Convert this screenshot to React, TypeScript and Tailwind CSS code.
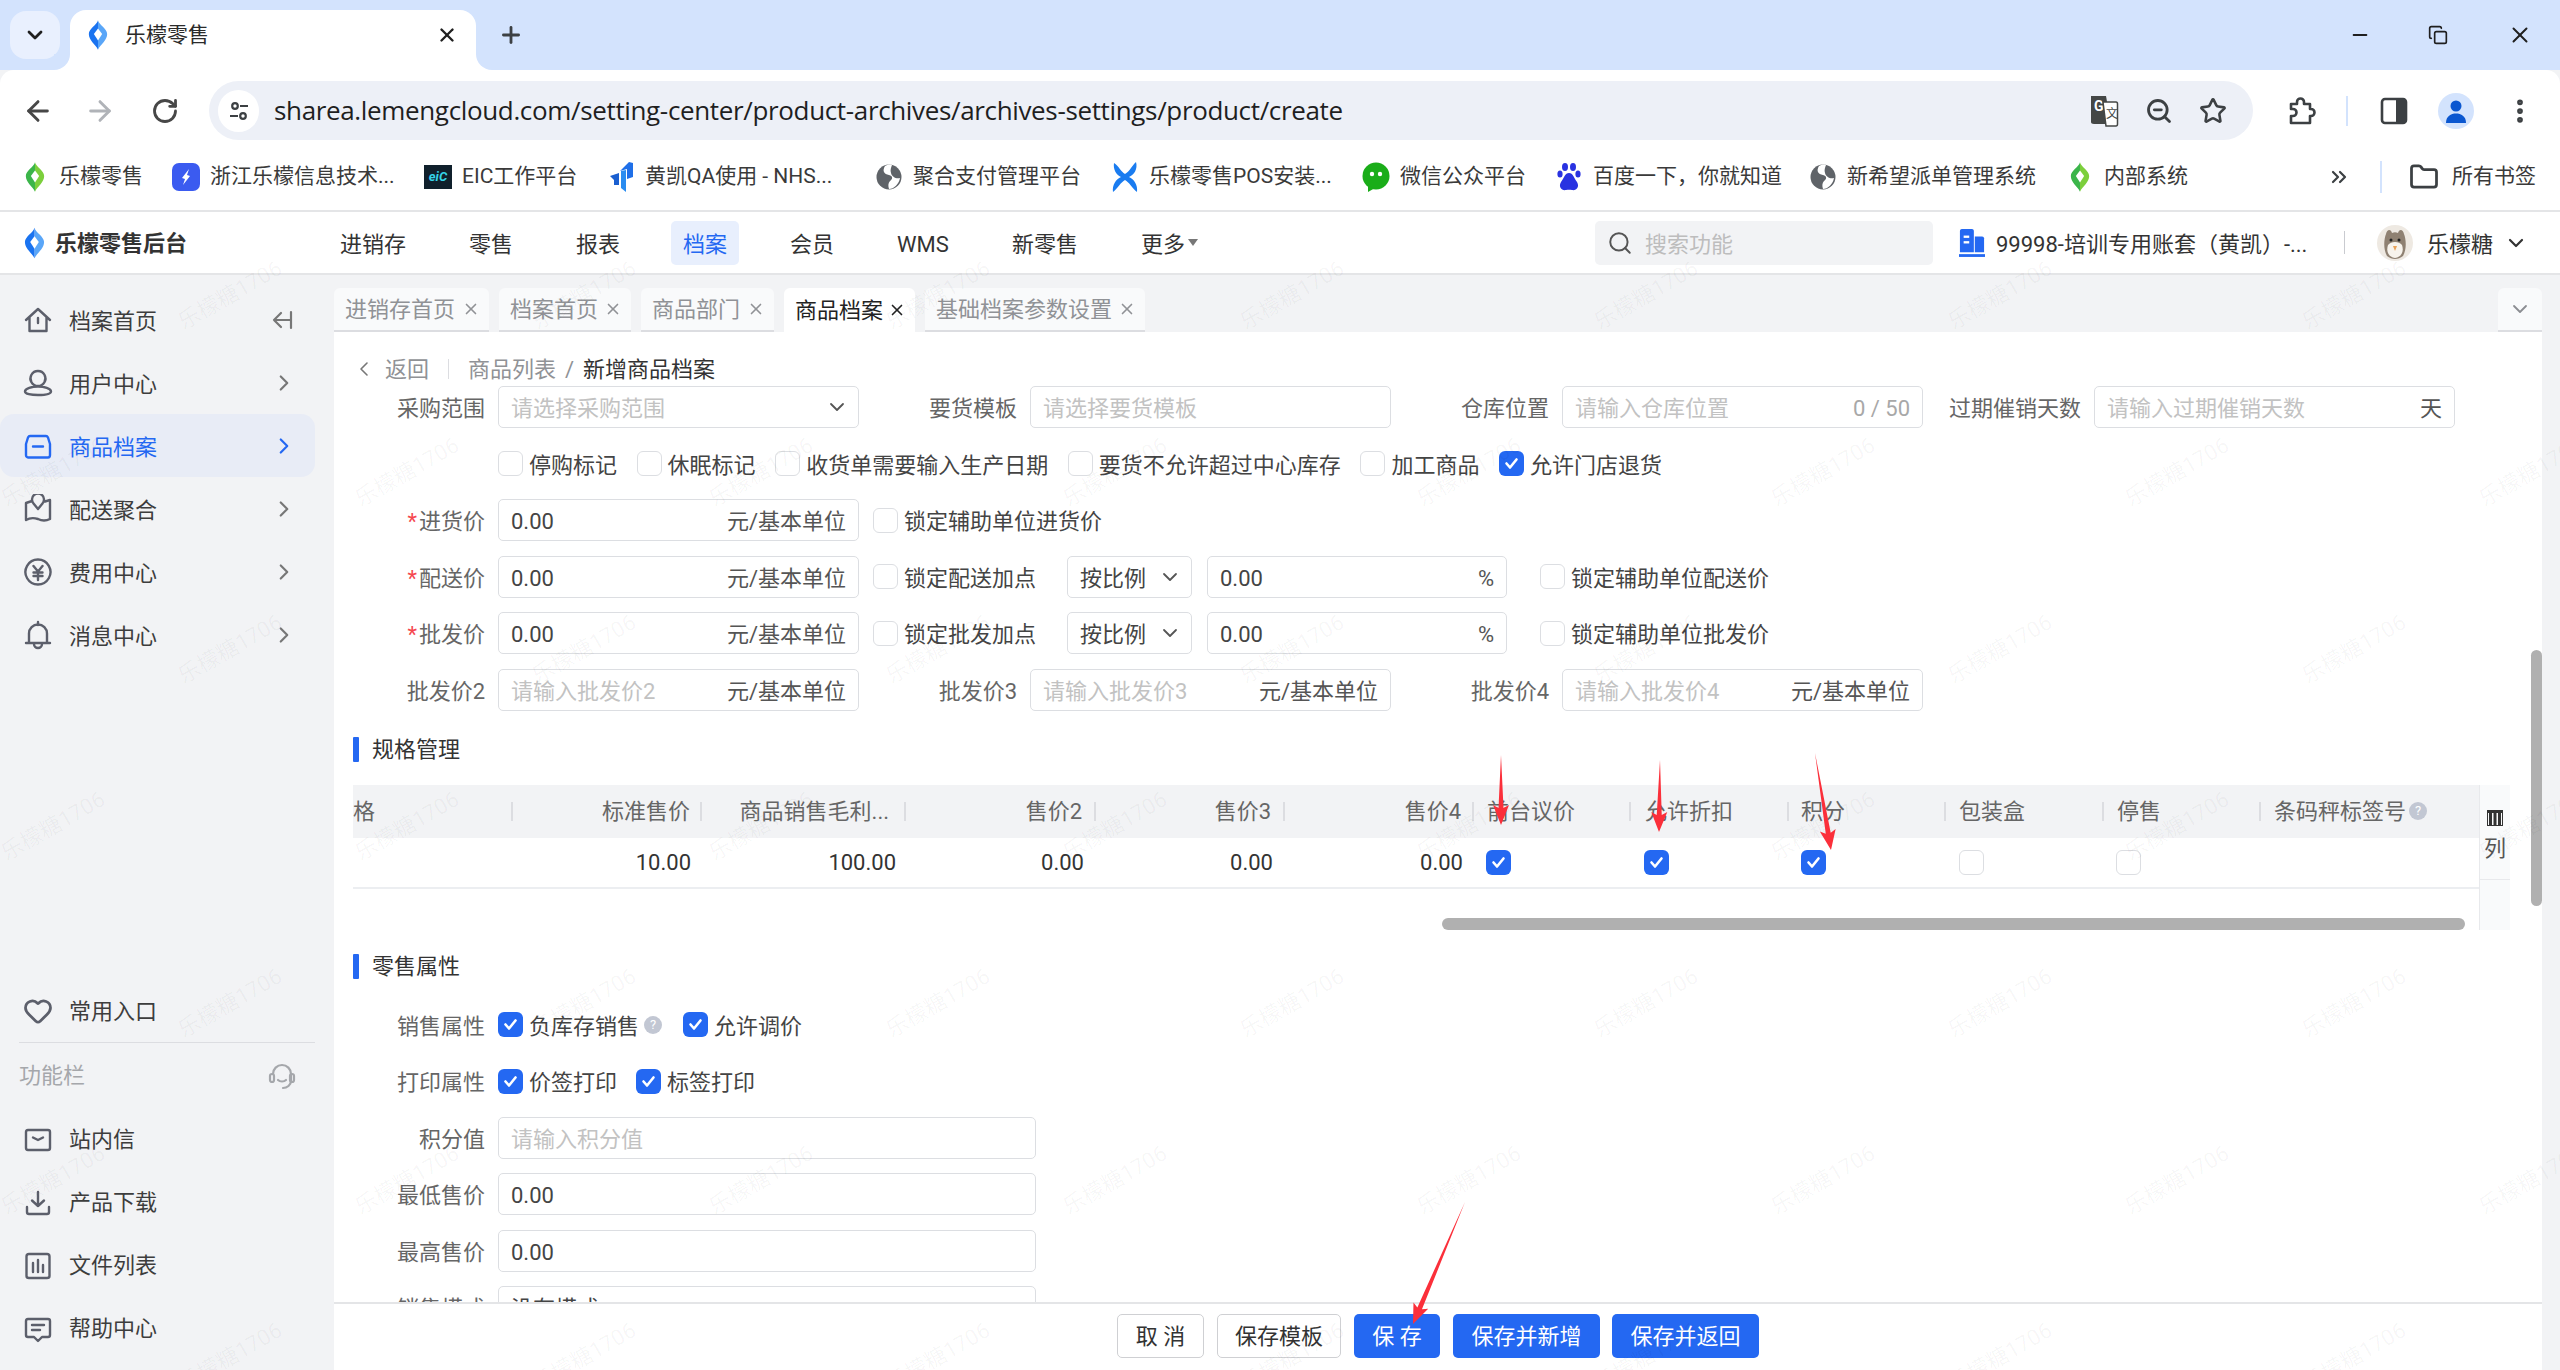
import React from 'react';
import { ArrowLeft, ArrowRight, RotateCw, X, Plus, Minus, ChevronDown, ChevronRight, ChevronLeft, Search, Star, MoreVertical, ChevronsRight, Folder, Heart, ZoomOut, Copy } from 'lucide-react';

const stroke = { fill: 'none', stroke: 'currentColor', strokeWidth: 2.4, strokeLinecap: 'round' as const, strokeLinejoin: 'round' as const };

function Ico({ d, size = 30 }: { d: string; size?: number }) {
  return (
    <svg width={size} height={size} viewBox="0 0 30 30" {...stroke} className="shrink-0">
      <path d={d} />
    </svg>
  );
}

function Leaf({ a, b, w = 22, h = 32 }: { a: string; b: string; w?: number; h?: number }) {
  return (
    <svg width={w} height={h} viewBox="0 0 24 34" className="shrink-0">
      <path d="M12 1 C13 6 22 10 22 16 C22 23 15 27 12 33 Z" fill={b} />
      <path d="M12 1 C11 6 2 10 2 16 C2 23 9 27 12 33 Z" fill={a} />
      <path d="M12 10 L16.5 16 L12 23 L7.5 16 Z" fill="#fff" />
    </svg>
  );
}

function Globe() {
  return (
    <svg width="26" height="26" viewBox="0 0 26 26" className="shrink-0">
      <circle cx="13" cy="13" r="12.5" fill="#5f6368" />
      <path d="M9 2 C6 7 8 10 13 11 C17 12 17 15 14 17 C12 19 12 22 13 25 C18 25 23 20 24 14 C20 15 16 13 15 9 C14 6 15 4 16 1 C13 0 11 1 9 2 Z" fill="#fff" />
    </svg>
  );
}

const bookmarks: { t: string; w: string; icon: React.ReactNode }[] = [
  { t: '乐檬零售', w: 'w-[151px]', icon: <Leaf a="#3bb54a" b="#7ccf3c" /> },
  { t: '浙江乐檬信息技术...', w: 'w-[252px]', icon: <svg width="28" height="28" viewBox="0 0 28 28" className="shrink-0"><rect width="28" height="28" rx="7" fill="#3b5bf0" /><path d="M17 6 L10 15 L13 16 L11 22 L18 13 L15 12 Z" fill="#fff" /></svg> },
  { t: 'EIC工作平台', w: 'w-[183px]', icon: <div className="w-[28px] h-[24px] bg-[#10202c] flex items-center justify-center text-[13px] font-bold italic text-[#35d4e8] shrink-0">eiC</div> },
  { t: '黄凯QA使用 - NHS...', w: 'w-[268px]', icon: <svg width="28" height="32" viewBox="0 0 28 32" className="shrink-0"><path d="M22 1 L26 2 L26 16 L20 18 L20 8 L13 10 Z" fill="#1f6fe8" /><path d="M14 10 L19 9 L19 31 L14 27 Z" fill="#2a8cf0" /><path d="M3 15 L12 12 L12 24 L7 24 L7 19 Z" fill="#1a5fd0" /></svg> },
  { t: '聚合支付管理平台', w: 'w-[236px]', icon: <Globe /> },
  { t: '乐檬零售POS安装...', w: 'w-[251px]', icon: <svg width="28" height="32" viewBox="0 0 28 32" className="shrink-0"><path d="M3 2 C8 5 10 11 14 13 C18 11 20 6 25 1 C27 8 23 14 18 16 C23 18 27 24 26 31 C21 27 18 21 14 19 C10 21 7 27 2 31 C1 24 5 18 10 16 C5 14 2 8 3 2 Z" fill="#1a7cf0" /></svg> },
  { t: '微信公众平台', w: 'w-[193px]', icon: <svg width="28" height="30" viewBox="0 0 28 30" className="shrink-0"><circle cx="14" cy="14" r="13.5" fill="#1aad19" /><path d="M6 24 L6 30 L13 26 Z" fill="#1aad19" /><circle cx="10" cy="12" r="2.2" fill="#fff" /><circle cx="18" cy="12" r="2.2" fill="#fff" /></svg> },
  { t: '百度一下，你就知道', w: 'w-[254px]', icon: <svg width="24" height="30" viewBox="0 0 24 30" className="shrink-0" fill="#2932e1"><ellipse cx="8" cy="5" rx="3" ry="4" /><ellipse cx="16" cy="5" rx="3" ry="4" /><ellipse cx="3" cy="12" rx="2.6" ry="3.6" /><ellipse cx="21" cy="12" rx="2.6" ry="3.6" /><path d="M12 11 C8 11 7 16 4 20 C1 25 5 29 9 28 C11 27.500 13 27.500 15 28 C19 29 23 25 20 20 C17 16 16 11 12 11 Z" /></svg> },
  { t: '新希望派单管理系统', w: 'w-[257px]', icon: <Globe /> },
  { t: '内部系统', w: 'w-[260px]', icon: <Leaf a="#3bb54a" b="#7ccf3c" /> },
];

const sideTop: { t: string; d: string }[] = [
  { t: '档案首页', d: 'M3 15 L15 4 L27 15 M6.500 12.500 V26 H23.500 V12.500 M15 13 V18' },
  { t: '用户中心', d: 'M15 3 A7.500 7.500 0 1 1 14.900 3 Z M15 18.500 C21 18.500 28 20.500 28 23.500 C28 26 22 27 15 27 C8 27 2 26 2 23.500 C2 20.500 9 18.500 15 18.500 Z' },
  { t: '商品档案', d: 'M7 5 H23 C24 5 24.500 5.500 25 6.500 L27 13 V24 C27 25.500 26 26.500 25 26.500 H5 C4 26.500 3 25.500 3 24 V13 L5 6.500 C5.500 5.500 6 5 7 5 Z M10 15.500 H20' },
  { t: '配送聚合', d: 'M9 7 L3 9 V26 C8 23 12 24 15 25 C19 27 23 27 27 25 V6 L22 7.500 M15 15 L10.500 9.500 A6 6 0 1 1 19.500 9.500 Z' },
  { t: '费用中心', d: 'M15 2.500 A12.500 12.500 0 1 1 14.900 2.500 Z M10.500 9 L15 14.500 L19.500 9 M10.500 15.500 H19.500 M10.500 19 H19.500 M15 14.500 V23' },
  { t: '消息中心', d: 'M15 2 V5 M6 23 V13.500 A9 9 0 0 1 24 13.500 V23 M3 23 H27 M11 24 A4 4 0 0 0 19 24' },
];

const sideBottom: { t: string; d: string }[] = [
  { t: '站内信', d: 'M5 5 H25 C26.500 5 27 6 27 7 V23 C27 24 26.500 25 25 25 H5 C3.500 25 3 24 3 23 V7 C3 6 3.500 5 5 5 Z M10 12.500 L15 15 L20 12.500' },
  { t: '产品下载', d: 'M15 4 V18 M9 12.500 L15 18 L21 12.500 M4 19 V24 C4 25.500 5 26 6 26 H24 C25 26 26 25.500 26 24 V19' },
  { t: '文件列表', d: 'M6 3 H24 C25.500 3 26.500 4 26.500 5.500 V25 C26.500 26 25.500 27 24 27 H6 C4.500 27 3.500 26 3.500 25 V5.500 C3.500 4 4.500 3 6 3 Z M10 12 V21 M15 9 V21 M20 14 V21' },
  { t: '帮助中心', d: 'M5 5 H25 C26.500 5 27 6 27 7 V21 C27 22.500 26.500 23 25 23 H19 L15 27 L11 23 H5 C3.500 23 3 22.500 3 21 V7 C3 6 3.500 5 5 5 Z M9 11 H21 M9 16 H17' },
];

function Check({ on = false }: { on?: boolean }) {
  return on ? (
    <span className="w-[25px] h-[25px] rounded-[6px] bg-[#2468f2] flex items-center justify-center shrink-0">
      <svg width="17" height="17" viewBox="0 0 17 17" fill="none" stroke="#fff" strokeWidth="2.600" strokeLinecap="round" strokeLinejoin="round"><path d="M3.500 8.500 L7 12.500 L13.500 4.500" /></svg>
    </span>
  ) : (
    <span className="w-[25px] h-[25px] rounded-[6px] border border-[#dcdee2] bg-white shrink-0" />
  );
}

function Cb({ t, on, cls = '' }: { t: string; on?: boolean; cls?: string }) {
  return (
    <div className={`flex items-center gap-[6px] whitespace-nowrap text-[#444] ${cls}`}>
      <Check on={on} />
      <span className="pt-[3px]">{t}</span>
    </div>
  );
}

function Help() {
  return <span className="w-[18px] h-[18px] rounded-full bg-[#c2c7d3] text-white text-[13px] flex items-center justify-center shrink-0">?</span>;
}

function Field({ ph, v, suffix, w = 'w-[361px]', chev, sufCls = 'text-[#555]' }: { ph?: string; v?: string; suffix?: string; w?: string; chev?: boolean; sufCls?: string }) {
  return (
    <div className={`h-[42px] ${w} border border-[#dcdee2] rounded-[5px] bg-white flex items-center justify-between pl-[12px] pr-[12px] pt-[3px] shrink-0 whitespace-nowrap`}>
      <span className={v ? 'text-[#444]' : 'text-[#c2c2c2]'}>{v ?? ph}</span>
      {suffix && <span className={sufCls}>{suffix}</span>}
      {chev && <ChevronDown size={24} className="text-[#555] -mt-[3px] -mr-[3px]" strokeWidth={1.8} />}
    </div>
  );
}

function Label({ t, req }: { t: string; req?: boolean }) {
  return (
    <div className="w-[127px] mr-[13px] flex justify-end text-[#666] shrink-0 whitespace-nowrap pt-[3px]">
      {req && <span className="text-[#f5484f] mr-[2px]">*</span>}
      <span>{t}</span>
    </div>
  );
}

function Unit({ ph, v }: { ph?: string; v?: string }) {
  return <Field ph={ph} v={v} suffix="元/基本单位" />;
}

const headCols: { t: string; w: string; cls: string; help?: boolean }[] = [
  { t: '格', w: 'w-[160px]', cls: 'justify-start pr-[13px]' },
  { t: '标准售价', w: 'w-[189px]', cls: 'justify-end pr-[10px]' },
  { t: '商品销售毛利...', w: 'w-[204px]', cls: 'justify-end pr-[15px]' },
  { t: '售价2', w: 'w-[190px]', cls: 'justify-end pr-[12px]' },
  { t: '售价3', w: 'w-[189px]', cls: 'justify-end pr-[12px]' },
  { t: '售价4', w: 'w-[189px]', cls: 'justify-end pr-[11px]' },
  { t: '前台议价', w: 'w-[157px]', cls: 'pl-[13px]' },
  { t: '允许折扣', w: 'w-[158px]', cls: 'pl-[14px]' },
  { t: '积分', w: 'w-[157px]', cls: 'pl-[12px]' },
  { t: '包装盒', w: 'w-[158px]', cls: 'pl-[13px]' },
  { t: '停售', w: 'w-[157px]', cls: 'pl-[13px]' },
  { t: '条码秤标签号', w: 'w-[218px]', cls: 'pl-[13px]', help: true },
];

const rowCells: { w: string; v?: string; chk?: boolean; pr?: string; pl?: string }[] = [
  { w: 'w-[160px]' },
  { w: 'w-[189px]', v: '10.00', pr: 'pr-[11px]' },
  { w: 'w-[204px]', v: '100.00', pr: 'pr-[10px]' },
  { w: 'w-[190px]', v: '0.00', pr: 'pr-[12px]' },
  { w: 'w-[189px]', v: '0.00', pr: 'pr-[12px]' },
  { w: 'w-[189px]', v: '0.00', pr: 'pr-[11px]' },
  { w: 'w-[157px]', chk: true, pl: 'pl-[12px]' },
  { w: 'w-[158px]', chk: true, pl: 'pl-[13px]' },
  { w: 'w-[157px]', chk: true, pl: 'pl-[12px]' },
  { w: 'w-[158px]', chk: false, pl: 'pl-[13px]' },
  { w: 'w-[157px]', chk: false, pl: 'pl-[12px]' },
  { w: 'w-[218px]' },
];

function Arrow({ x1, y1, x2, y2 }: { x1: number; y1: number; x2: number; y2: number }) {
  const dx = x2 - x1, dy = y2 - y1, len = Math.hypot(dx, dy);
  const ux = dx / len, uy = dy / len, nx = -uy, ny = ux;
  const p = (a: number, n: number) => `${x2 - ux * a + nx * n},${y2 - uy * a + ny * n}`;
  const pts = [`${x1},${y1}`, p(17, 2.500), p(20, 8), `${x2},${y2}`, p(20, -8), p(17, -2.500)].join(' ');
  return <polygon points={pts} fill="#fb2f3a" />;
}

const marks: { x: number; y: number }[] = [];
for (let j = 0; j < 4; j++) {
  for (let k = 0; k < 8; k++) {
    marks.push({ x: 230 + 354 * k, y: 295 + 354 * j });
    marks.push({ x: 53 + 354 * k, y: 472 + 354 * j });
  }
}

export default function App() {
  return (
    <div className="relative w-[2560px] h-[1370px] overflow-hidden bg-[#f2f3f5] flex flex-col text-[22px] text-[#333] font-['Roboto','Noto_Sans_CJK_SC',sans-serif]">
      {/* tab strip */}
      <div className="h-[70px] bg-[#d3e3fd] flex items-start shrink-0 relative">
        <div className="mt-[11px] ml-[10px] w-[50px] h-[48px] rounded-[16px] bg-[#e9f0fe] flex items-center justify-center">
          <ChevronDown size={24} strokeWidth={2.800} className="text-[#1f1f1f]" />
        </div>
        <div className="relative mt-[10px] ml-[10px] w-[406px] h-[60px] bg-white rounded-t-[16px] flex items-center pb-[10px]">
          <span className="absolute left-[-16px] bottom-0 w-[16px] h-[16px] bg-white"><span className="block w-full h-full bg-[#d3e3fd] rounded-br-[16px]" /></span>
          <span className="absolute right-[-16px] bottom-0 w-[16px] h-[16px] bg-white"><span className="block w-full h-full bg-[#d3e3fd] rounded-bl-[16px]" /></span>
          <span className="ml-[17px]"><Leaf a="#1a73f0" b="#5aa6f8" w={22} h={34} /></span>
          <span className="ml-[16px] pt-[2px] text-[21px] text-[#2b2b2b] whitespace-nowrap">乐檬零售</span>
          <X size={22} strokeWidth={2.600} className="ml-auto mr-[18px] text-[#1f1f1f]" />
        </div>
        <Plus size={26} strokeWidth={2.600} className="mt-[22px] ml-[22px] text-[#3c4043]" />
        <div className="ml-auto flex items-center h-[70px] text-[#1f1f1f]">
          <Minus size={22} strokeWidth={2} />
          <Copy size={20} strokeWidth={2} className="ml-[57px]" />
          <X size={26} strokeWidth={1.800} className="ml-[59px] mr-[27px]" />
        </div>
      </div>
      {/* toolbar */}
      <div className="h-[80px] bg-white rounded-t-[14px] flex items-start pt-[11px] shrink-0 bg-clip-padding">
        <div className="h-[59px] flex items-center text-[#474747]">
          <ArrowLeft size={32} strokeWidth={2.200} className="ml-[22px]" />
          <ArrowRight size={32} strokeWidth={2.200} className="ml-[30px] text-[#b0b3b8]" />
          <RotateCw size={28} strokeWidth={2.400} className="ml-[35px]" />
        </div>
        <div className="ml-[30px] w-[2044px] h-[59px] rounded-full bg-[#edf0f7] flex items-center shrink-0">
          <div className="ml-[9px] w-[41px] h-[42px] rounded-full bg-white flex items-center justify-center">
            <svg width="24" height="24" viewBox="0 0 24 24" fill="none" stroke="#3c4043" strokeWidth="2.200"><circle cx="8" cy="7" r="2.800" /><circle cx="16" cy="17" r="2.800" /><path d="M13 7 H21 M3 17 H11" /></svg>
          </div>
          <span className="ml-[15px] text-[26px] text-[#1f1f1f] whitespace-nowrap font-['Open_Sans',sans-serif] tracking-[-0.35px]">sharea.lemengcloud.com/setting-center/product-archives/archives-settings/product/create</span>
          <div className="ml-auto mr-[26px] flex items-center gap-[26px] text-[#3c4043]">
            <svg width="30" height="34" viewBox="0 0 30 34" className="shrink-0"><path d="M2 2 H17 L22 30 H5 C3 30 2 29 2 28 Z" fill="#444746" /><text x="5" y="17" fontSize="14" fontWeight="700" fill="#fff">G</text><path d="M14 8 H27 C28 8 28.500 9 28.500 10 V30 C28.500 31 28 32 27 32 H17 Z" fill="#fff" stroke="#444746" strokeWidth="1.500" /><text x="17" y="24" fontSize="12" fill="#444746">文</text></svg>
            <ZoomOut size={28} strokeWidth={2.400} />
            <Star size={28} strokeWidth={2.200} />
          </div>
        </div>
        <div className="h-[59px] flex items-center text-[#3c4043]">
          <svg width="30" height="32" viewBox="0 0 30 32" className="ml-[33px]" fill="none" stroke="#3c4043" strokeWidth="2.600" strokeLinejoin="round"><path d="M5 9 H11 V7 A3.500 3.500 0 0 1 18 7 V9 H24 V14 H25 A3.500 3.500 0 0 1 25 21 H24 V28 H5 V21 H7 A3.500 3.500 0 0 0 7 14 H5 Z" /></svg>
          <span className="ml-[30px] w-[2px] h-[30px] bg-[#d3e3fd]" />
          <svg width="30" height="30" viewBox="0 0 30 30" className="ml-[31px]" fill="none"><rect x="3" y="3" width="24" height="24" rx="3" stroke="#3c4043" strokeWidth="2.600" /><rect x="17" y="3" width="10" height="24" fill="#3c4043" /></svg>
          <div className="ml-[29px] w-[36px] h-[36px] rounded-full bg-[#d3e3fd] flex items-center justify-center overflow-hidden">
            <svg width="28" height="28" viewBox="0 0 28 28" fill="#0b57d0"><circle cx="14" cy="9" r="5.500" /><path d="M4 26 C4 19 9 16.500 14 16.500 C19 16.500 24 19 24 26 Z" /></svg>
          </div>
          <MoreVertical size={30} strokeWidth={2.600} className="ml-[31px]" />
        </div>
      </div>
      {/* bookmarks */}
      <div className="h-[62px] bg-white border-b-2 border-[#e4e5e7] flex items-center text-[21px] text-[#3a3a3a] shrink-0 pl-[22px] pb-[6px] whitespace-nowrap">
        {bookmarks.map((b) => (
          <div key={b.t} className={`flex items-center ${b.w} shrink-0`}>
            <span className="w-[26px] flex justify-center shrink-0">{b.icon}</span>
            <span className="ml-[11px]">{b.t}</span>
          </div>
        ))}
        <ChevronsRight size={24} strokeWidth={2.200} className="text-[#3c4043]" />
        <span className="ml-[29px] w-[2px] h-[32px] bg-[#d3e3fd]" />
        <Folder size={30} strokeWidth={2.200} className="ml-[27px] text-[#3c4043]" />
        <span className="ml-[13px]">所有书签</span>
      </div>
      {/* app header */}
      <div className="h-[63px] bg-white border-b-2 border-[#e4e5e7] flex items-center shrink-0">
        <div className="w-[328px] flex items-center pl-[23px] shrink-0">
          <Leaf a="#1a73f0" b="#5aa6f8" w={23} h={36} />
          <span className="ml-[9px] pt-[2px] font-bold text-[#333] text-[22px] whitespace-nowrap">乐檬零售后台</span>
        </div>
        <nav className="flex items-center gap-[39px] whitespace-nowrap">
          {['进销存', '零售', '报表', '档案', '会员', 'WMS', '新零售'].map((n) => (
            <span key={n} className={n === '档案' ? 'h-[44px] px-[12px] pt-[3px] flex items-center rounded-[5px] bg-[#e8effd] text-[#2468f2]' : 'h-[44px] px-[12px] pt-[3px] flex items-center'}>{n}</span>
          ))}
          <span className="h-[44px] px-[12px] pt-[3px] flex items-center">更多<span className="ml-[3px] mb-[4px] w-0 h-0 border-x-[5px] border-x-transparent border-t-[7px] border-t-[#777]" /></span>
        </nav>
        <div className="ml-auto flex items-center pr-[32px] whitespace-nowrap">
          <div className="w-[338px] h-[44px] rounded-[5px] bg-[#f2f3f5] flex items-center pl-[12px] text-[#bdbdbd]">
            <Search size={26} strokeWidth={1.800} className="text-[#555]" />
            <span className="ml-[12px] pt-[3px]">搜索功能</span>
          </div>
          <svg width="26" height="28" viewBox="0 0 28 30" className="ml-[26px] shrink-0"><path d="M1 2 C1 1 2 0 3 0 H14 C15 0 16 1 16 2 V25 H1 Z" fill="#2468f2" /><path d="M17 8 H25 C26 8 27 9 27 10 V25 H17 Z" fill="#2468f2" /><rect x="5" y="7" width="6" height="2.500" fill="#fff" /><rect x="5" y="13" width="6" height="2.500" fill="#fff" /><rect x="0" y="27" width="28" height="3" fill="#2468f2" /></svg>
          <span className="ml-[11px] w-[312px] pt-[3px] overflow-hidden">99998-培训专用账套（黄凯）-...</span>
          <span className="ml-[36px] w-[1px] h-[23px] bg-[#c9cbd0]" />
          <svg width="36" height="36" viewBox="0 0 36 36" className="ml-[32px] shrink-0"><circle cx="18" cy="18" r="18" fill="#eee9e2" /><path d="M9 9 C10 4 14 4 15 8 C17 7 19 7 21 8 C22 4 26 4 27 9 C29 14 30 24 26 31 C21 35 15 35 10 31 C6 24 7 14 9 9 Z" fill="#8f8172" /><path d="M11 20 C14 16 22 16 25 20 C27 26 25 32 18 33 C11 32 9 26 11 20 Z" fill="#f7f3ec" /><circle cx="14" cy="15" r="1.500" fill="#222" /><circle cx="22" cy="15" r="1.500" fill="#222" /><path d="M16 21 H20 L18 26 Z" fill="#e8a25a" /></svg>
          <span className="ml-[14px] w-[66px] pt-[3px]">乐檬糖</span>
          <ChevronDown size={24} strokeWidth={2.200} className="ml-[11px] text-[#333]" />
        </div>
      </div>
      {/* body */}
      <div className="flex-1 flex min-h-0">
        <aside className="w-[334px] shrink-0 flex flex-col pt-[13px] pb-[10px] text-[#3d3d3d]">
          {sideTop.map((s, i) => (
            <div key={s.t} className={i === 2 ? 'w-[315px] h-[63px] flex items-center pl-[23px] rounded-[14px] bg-[#e8ecf6] text-[#2468f2]' : 'w-[315px] h-[63px] flex items-center pl-[23px]'}>
              <span className={i === 2 ? 'text-[#2468f2]' : 'text-[#5c5f6b]'}><Ico d={s.d} /></span>
              <span className="ml-[16px] pt-[3px] whitespace-nowrap">{s.t}</span>
              {i === 0 ? (
                <svg width="24" height="24" viewBox="0 0 24 24" className="ml-auto mr-[20px] text-[#777]" fill="none" stroke="currentColor" strokeWidth="2.200" strokeLinecap="round" strokeLinejoin="round"><path d="M10 5 L3 12 L10 19 M3 12 H19 M20 4 V20" /></svg>
              ) : (
                <ChevronRight size={26} strokeWidth={2} className={i === 2 ? 'ml-auto mr-[18px] text-[#2468f2]' : 'ml-auto mr-[18px] text-[#777]'} />
              )}
            </div>
          ))}
          <div className="mt-auto w-[315px] h-[63px] flex items-center pl-[23px]">
            <Heart size={30} strokeWidth={2.200} className="text-[#5c5f6b]" />
            <span className="ml-[16px] pt-[2px]">常用入口</span>
          </div>
          <div className="ml-[19px] w-[296px] h-[1px] bg-[#dcdde1]" />
          <div className="w-[315px] h-[65px] flex items-center pl-[19px] text-[#a5a7ab]">
            <span>功能栏</span>
            <svg width="28" height="28" viewBox="0 0 28 28" className="ml-auto mr-[19px]" fill="none" stroke="#a5a7ab" strokeWidth="2.200" strokeLinecap="round"><path d="M5 12 A9 9 0 0 1 23 12 V19 C23 23 19 26 15 26" /><rect x="2" y="12" width="4" height="8" rx="2" /><rect x="22" y="12" width="4" height="8" rx="2" /><path d="M10 18 C12 20 16 20 18 18" /></svg>
          </div>
          {sideBottom.map((s) => (
            <div key={s.t} className="w-[315px] h-[63px] flex items-center pl-[23px]">
              <span className="text-[#5c5f6b]"><Ico d={s.d} /></span>
              <span className="ml-[16px] whitespace-nowrap">{s.t}</span>
            </div>
          ))}
        </aside>
        <div className="flex-1 min-w-0 flex flex-col">
          {/* page tabs */}
          <div className="h-[57px] shrink-0 flex items-end text-[#909296]">
            <div className="flex items-end gap-[10px] w-[2164px] whitespace-nowrap">
              {[['进销存首页', 'w-[155px]'], ['档案首页', 'w-[132px]'], ['商品部门', 'w-[133px]'], ['商品档案', 'w-[131px]'], ['基础档案参数设置', 'w-[220px]']].map(([t, w]) => {
                const on = t === '商品档案';
                return (
                  <div key={t} className={`${w} h-[44px] rounded-t-[6px] flex items-center pl-[11px] pr-[9px] justify-between ${on ? 'bg-white text-[#222]' : 'bg-[#f9fafb] border-b-2 border-[#dcdde1]'}`}>
                    <span>{t}</span>
                    <X size={18} strokeWidth={2.200} className={on ? 'text-[#222]' : 'text-[#909296]'} />
                  </div>
                );
              })}
            </div>
            <div className="w-[44px] h-[44px] rounded-t-[6px] bg-[#f9fafb] border-b-2 border-[#dcdde1] flex items-center justify-center">
              <ChevronDown size={24} strokeWidth={1.800} className="text-[#8b8d91]" />
            </div>
          </div>
          {/* content */}
          <div className="flex-1 min-h-0 w-[2208px] bg-white flex flex-col">
            <div className="relative flex-1 min-h-0 overflow-hidden pl-[19px]">
              <span className="absolute right-0 top-[318px] w-[11px] h-[256px] rounded-full bg-[#b0b0b0]" />
              <div className="h-[54px] pt-[20px] flex items-center whitespace-nowrap">
                <ChevronLeft size={24} strokeWidth={1.600} className="ml-[-1px] text-[#777]" />
                <span className="ml-[9px] text-[#909296]">返回</span>
                <span className="ml-[19px] w-[1px] h-[20px] bg-[#dcdde1]" />
                <span className="ml-[19px] text-[#909296]">商品列表</span>
                <span className="ml-[9px] text-[#909296]">/</span>
                <span className="ml-[9px] text-[#333]">新增商品档案</span>
              </div>
              <div className="ml-[5px] flex flex-col gap-[14.5px]">
                <div className="h-[42px] grid grid-cols-[repeat(4,532px)] items-center">
                  <div className="flex items-center"><Label t="采购范围" /><Field ph="请选择采购范围" chev /></div>
                  <div className="flex items-center"><Label t="要货模板" /><Field ph="请选择要货模板" /></div>
                  <div className="flex items-center"><Label t="仓库位置" /><Field ph="请输入仓库位置" suffix="0 / 50" sufCls="text-[#a8a8a8]" /></div>
                  <div className="flex items-center"><Label t="过期催销天数" /><Field ph="请输入过期催销天数" suffix="天" /></div>
                </div>
                <div className="h-[42px] flex items-center pl-[140px] gap-[19.6px]">
                  <Cb t="停购标记" />
                  <Cb t="休眠标记" />
                  <Cb t="收货单需要输入生产日期" />
                  <Cb t="要货不允许超过中心库存" />
                  <Cb t="加工商品" />
                  <Cb t="允许门店退货" on />
                </div>
                <div className="h-[42px] flex items-center">
                  <Label t="进货价" req /><Unit v="0.00" />
                  <Cb t="锁定辅助单位进货价" cls="ml-[14px]" />
                </div>
                <div className="h-[42px] flex items-center">
                  <Label t="配送价" req /><Unit v="0.00" />
                  <Cb t="锁定配送加点" cls="ml-[14px] w-[194px]" />
                  <Field v="按比例" w="w-[125px]" chev />
                  <Field v="0.00" suffix="%" w="w-[300px] ml-[15px]" />
                  <Cb t="锁定辅助单位配送价" cls="ml-[33px]" />
                </div>
                <div className="h-[42px] flex items-center">
                  <Label t="批发价" req /><Unit v="0.00" />
                  <Cb t="锁定批发加点" cls="ml-[14px] w-[194px]" />
                  <Field v="按比例" w="w-[125px]" chev />
                  <Field v="0.00" suffix="%" w="w-[300px] ml-[15px]" />
                  <Cb t="锁定辅助单位批发价" cls="ml-[33px]" />
                </div>
                <div className="h-[42px] grid grid-cols-[repeat(4,532px)] items-center">
                  <div className="flex items-center"><Label t="批发价2" /><Unit ph="请输入批发价2" /></div>
                  <div className="flex items-center"><Label t="批发价3" /><Unit ph="请输入批发价3" /></div>
                  <div className="flex items-center"><Label t="批发价4" /><Unit ph="请输入批发价4" /></div>
                </div>
              </div>
              {/* spec section */}
              <div className="mt-[26px] h-[25px] flex items-center">
                <span className="w-[6px] h-[25px] rounded-[1px] bg-[#2468f2]" />
                <span className="ml-[13px]">规格管理</span>
              </div>
              <div className="mt-[23px] flex items-start">
                <div className="w-[2126px] shrink-0">
                  <div className="h-[53px] bg-[#f2f3f5] flex items-center text-[#666] whitespace-nowrap">
                    {headCols.map((c, i) => (
                      <div key={c.t} className={`${c.w} ${c.cls} flex items-center h-[19px] shrink-0 ${i < 11 ? 'border-r-2 border-[#dcdde1]' : ''}`}>
                        <span>{c.t}</span>
                        {c.help && <span className="ml-[3px]"><Help /></span>}
                      </div>
                    ))}
                  </div>
                  <div className="h-[51px] border-b-2 border-[#eceef1] flex items-center text-[#333]">
                    {rowCells.map((c, i) => (
                      <div key={i} className={`${c.w} ${c.pr ?? ''} ${c.pl ?? ''} flex items-center shrink-0 ${c.v ? 'justify-end' : ''}`}>
                        {c.v}
                        {c.chk !== undefined && <Check on={c.chk} />}
                      </div>
                    ))}
                  </div>
                  <div className="mt-[29px] ml-[1089px] w-[1023px] h-[12px] rounded-full bg-[#b0b0b0]" />
                </div>
                <div className="w-[31px] h-[145px] bg-[#f9fafb] border-l border-[#e8e9ec] flex flex-col items-center shrink-0">
                  <svg width="16" height="16" viewBox="0 0 16 16" className="mt-[25px]"><rect x="0.500" y="0.500" width="15" height="15" fill="none" stroke="#333" /><rect x="0" y="0" width="16" height="3" fill="#333" /><rect x="2" y="3" width="3" height="12" fill="#333" /><rect x="6.500" y="3" width="3" height="12" fill="#333" /><rect x="11" y="3" width="3" height="12" fill="#333" /></svg>
                  <span className="mt-[6px] text-[#555]">列</span>
                  <span className="mt-[14px] w-full h-[1px] bg-[#e8e9ec]" />
                </div>
              </div>
              {/* retail section */}
              <div className="mt-[24px] h-[25px] flex items-center">
                <span className="w-[6px] h-[25px] rounded-[1px] bg-[#2468f2]" />
                <span className="ml-[13px]">零售属性</span>
              </div>
              <div className="ml-[5px] mt-[25px] flex flex-col gap-[14.5px]">
                <div className="h-[42px] flex items-center">
                  <Label t="销售属性" />
                  <Cb t="负库存销售" on />
                  <span className="ml-[5px]"><Help /></span>
                  <Cb t="允许调价" on cls="ml-[21px]" />
                </div>
                <div className="h-[42px] flex items-center gap-0">
                  <Label t="打印属性" />
                  <Cb t="价签打印" on />
                  <Cb t="标签打印" on cls="ml-[19px]" />
                </div>
                <div className="h-[42px] flex items-center"><Label t="积分值" /><Field ph="请输入积分值" w="w-[538px]" /></div>
                <div className="h-[42px] flex items-center"><Label t="最低售价" /><Field v="0.00" w="w-[538px]" /></div>
                <div className="h-[42px] flex items-center"><Label t="最高售价" /><Field v="0.00" w="w-[538px]" /></div>
                <div className="h-[42px] flex items-center"><Label t="销售模式" /><Field v="没有模式" w="w-[538px]" /></div>
              </div>
            </div>
            {/* footer */}
            <div className="h-[68px] shrink-0 border-t-2 border-[#e4e5e7] bg-white flex items-center pl-[783px] whitespace-nowrap pb-[2px]">
              <button className="w-[87px] h-[44px] rounded-[5px] border border-[#cfd0d3] bg-white text-[#333]">取 消</button>
              <button className="ml-[13px] w-[124px] h-[44px] rounded-[5px] border border-[#cfd0d3] bg-white text-[#333]">保存模板</button>
              <button className="ml-[13px] w-[86px] h-[44px] rounded-[5px] bg-[#2468f2] text-white">保 存</button>
              <button className="ml-[13px] w-[147px] h-[44px] rounded-[5px] bg-[#2468f2] text-white">保存并新增</button>
              <button className="ml-[12px] w-[147px] h-[44px] rounded-[5px] bg-[#2468f2] text-white">保存并返回</button>
            </div>
          </div>
        </div>
        <div className="w-0" />
      </div>
      {/* watermark */}
      <div className="absolute left-0 right-0 top-[262px] bottom-0 overflow-hidden pointer-events-none">
        {marks.map((m, i) => (
          <span key={i} className="absolute -translate-x-1/2 -translate-y-1/2 -rotate-[30deg] text-[22px] text-black/[0.04] whitespace-nowrap" style={{ left: m.x, top: m.y - 262 }}>乐檬糖1706</span>
        ))}
      </div>
      {/* annotation arrows */}
      <svg width="2560" height="1370" className="absolute left-0 top-0 pointer-events-none">
        <Arrow x1={1501} y1={755} x2={1501} y2={825} />
        <Arrow x1={1660} y1={760} x2={1659} y2={832} />
        <Arrow x1={1815} y1={753} x2={1831} y2={850} />
        <Arrow x1={1465} y1={1202} x2={1413} y2={1324} />
      </svg>
    </div>
  );
}
